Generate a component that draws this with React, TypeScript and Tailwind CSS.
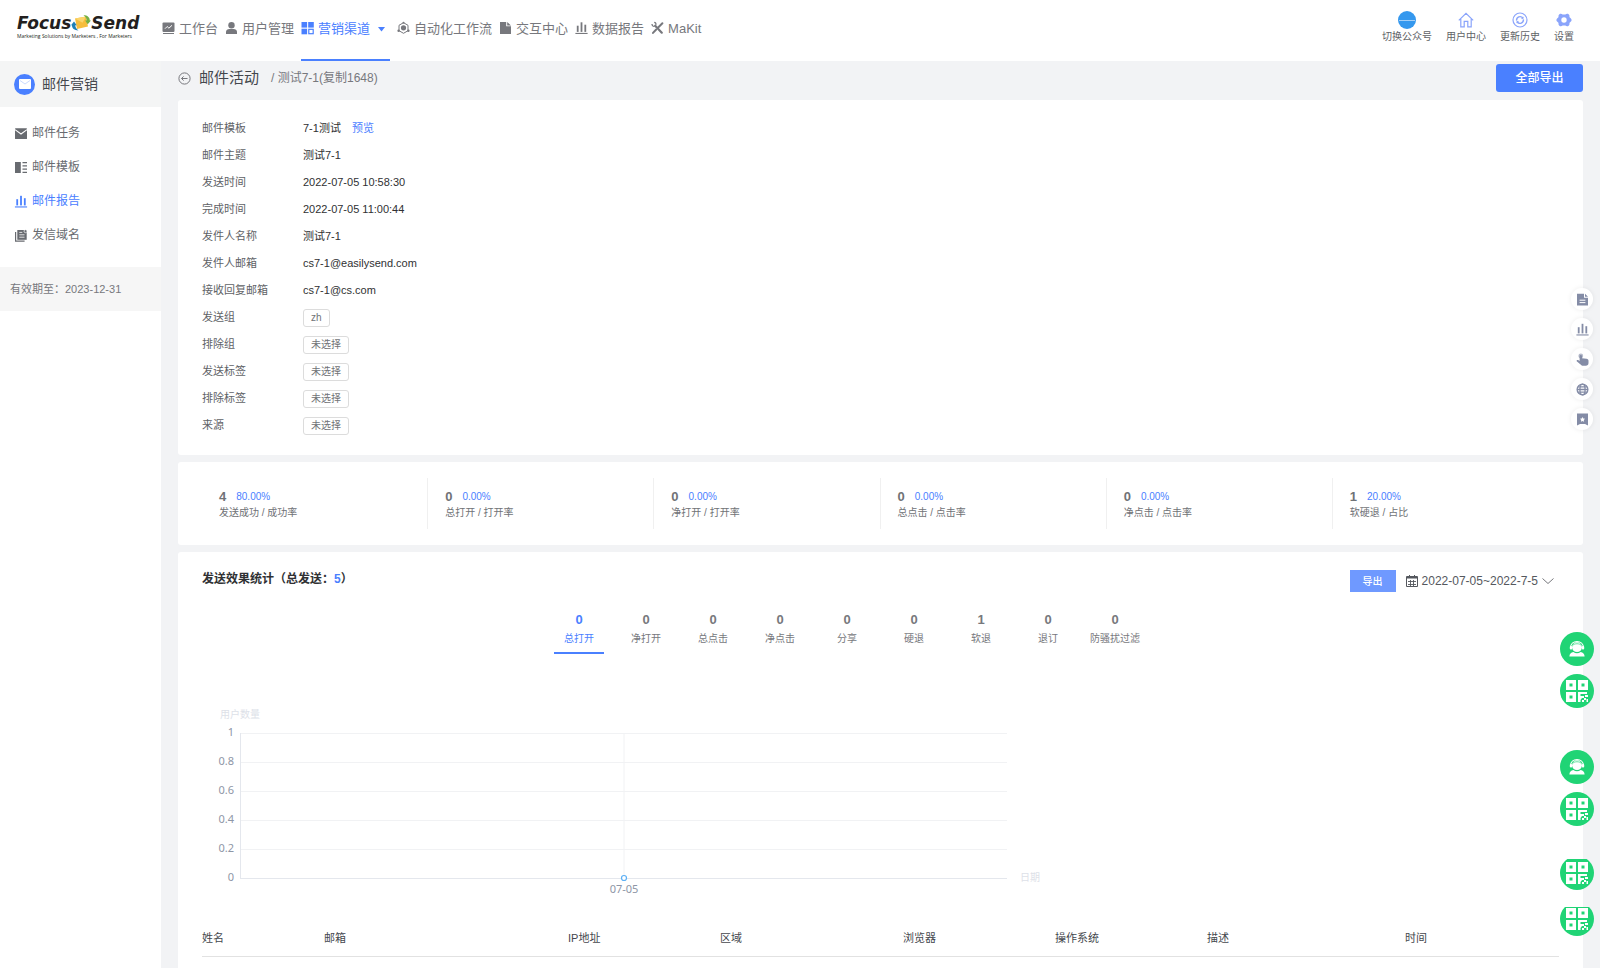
import type { ReactNode } from 'react'
import clsx from 'clsx'

/* ---------- icons ---------- */

type IconProps = { className?: string }

function BoardIcon({ className }: IconProps) {
  return (
    <svg className={className} viewBox="0 0 13 13" fill="none">
      <rect x="0.5" y="1" width="12" height="9.6" rx="1" fill="currentColor" />
      <path d="M3 7.2 5.2 5l1.7 1.7L10 3.8" stroke="#fff" strokeWidth="1" />
      <path d="M1 12h11" stroke="currentColor" strokeWidth="1" />
    </svg>
  )
}

function UserIcon({ className }: IconProps) {
  return (
    <svg className={className} viewBox="0 0 13 13" fill="currentColor">
      <circle cx="6.5" cy="3.7" r="3.2" />
      <path d="M1 12.4v-1.8c0-2 1.5-3.1 3.4-3.1h4.2c1.9 0 3.4 1.1 3.4 3.1v1.8z" />
    </svg>
  )
}

function GridIcon({ className }: IconProps) {
  return (
    <svg className={className} viewBox="0 0 13 13" fill="currentColor">
      <rect x="0.5" y="0.5" width="5.6" height="5.6" />
      <rect x="7.2" y="0.5" width="5.6" height="5.6" />
      <rect x="0.5" y="7.2" width="5.6" height="5.6" />
      <rect x="7.8" y="7.8" width="4.4" height="4.4" fill="none" stroke="currentColor" strokeWidth="1.2" />
    </svg>
  )
}

function FlowIcon({ className }: IconProps) {
  return (
    <svg className={className} viewBox="0 0 13 13" fill="currentColor">
      <path d="M6.5 1.2 11 3.8v5.4l-4.5 2.6L2 9.2V3.8z" fill="none" stroke="currentColor" strokeWidth="1" />
      <circle cx="6.5" cy="6.3" r="2.6" />
      <circle cx="6.5" cy="1.2" r="1" />
      <circle cx="1.6" cy="9.2" r="1.2" />
      <circle cx="11.4" cy="9.2" r="1.2" />
    </svg>
  )
}

function FileIcon({ className }: IconProps) {
  return (
    <svg className={className} viewBox="0 0 13 13" fill="currentColor">
      <path d="M1 .5h6.2v4.3H12v7.7H1z" />
      <path d="M8.2.5 12 3.9H8.2z" />
    </svg>
  )
}

function BarsIcon({ className }: IconProps) {
  return (
    <svg className={className} viewBox="0 0 13 13" fill="currentColor">
      <rect x="1.8" y="4.2" width="1.8" height="6.2" />
      <rect x="5.6" y="0.8" width="1.8" height="9.6" />
      <rect x="9.4" y="3.2" width="1.8" height="7.2" />
      <rect x="0.4" y="11.4" width="12.2" height="1.1" />
    </svg>
  )
}

function ToolsIcon({ className }: IconProps) {
  return (
    <svg className={className} viewBox="0 0 13 13" fill="none" stroke="currentColor">
      <path d="M4.2 4.2 10.8 11.2" strokeWidth="2.2" strokeLinecap="round" />
      <path d="M1 2.6c0 1.6 1 2.4 2.6 2.2M3.2.8c1.4.2 2 1 1.6 2.6" strokeWidth="1.3" />
      <path d="M11.4 1.8 7.4 5.8M5.2 8l-3.2 3.4" strokeWidth="2" strokeLinecap="round" />
    </svg>
  )
}

function MailIcon({ className }: IconProps) {
  return (
    <svg className={className} viewBox="0 0 13 13" fill="none">
      <rect x="0.5" y="1.2" width="12" height="10.8" rx="0.6" fill="currentColor" />
      <path d="M.5 2.6 6.5 7l6-4.4" stroke="#fff" strokeWidth="1.1" />
    </svg>
  )
}

function TemplateIcon({ className }: IconProps) {
  return (
    <svg className={className} viewBox="0 0 13 13" fill="currentColor">
      <rect x="0.5" y="1" width="5.8" height="11" />
      <path d="M8 1h4.5v1.2H8zM8 4.3h4.5v1.2H8zM8 7.5h4.5v1.2H8zM8 10.8h4.5V12H8z" />
    </svg>
  )
}

function DomainIcon({ className }: IconProps) {
  return (
    <svg className={className} viewBox="0 0 13 13" fill="none" stroke="currentColor">
      <path d="M1.1 3v9.1h9" strokeWidth="1.2" />
      <path d="M2.8 1h9.4v9.8H2.8z" fill="currentColor" stroke="none" />
      <path d="M4.8 3.4h3M4.8 5.8h5.2M4.8 8.2h5.2" stroke="#fff" strokeWidth="0.8" />
      <circle cx="11" cy="2.2" r="1.5" fill="currentColor" stroke="#fff" strokeWidth="0.7" />
    </svg>
  )
}

function HomeIcon({ className }: IconProps) {
  return (
    <svg className={className} viewBox="0 0 16 16" fill="none" stroke="currentColor" strokeWidth="1.2">
      <path d="M.8 8.4 8 1.4l7.2 7M2.8 7v7.9h3.4V9.4h3.6v5.5h3.4V7" />
    </svg>
  )
}

function HistoryIcon({ className }: IconProps) {
  return (
    <svg className={className} viewBox="0 0 16 16" fill="none" stroke="currentColor" strokeWidth="1.2">
      <circle cx="8" cy="8" r="7" />
      <path d="M4.6 8.6A3.5 3.5 0 0 1 10.8 6M11.4 7.4A3.5 3.5 0 0 1 5.2 10" strokeWidth="1.4" />
      <path d="m9.4 6.6 1.8-.2-.2-1.6M6.6 9.4l-1.8.2.2 1.6" strokeWidth="0.9" />
    </svg>
  )
}

function SettingIcon({ className }: IconProps) {
  return (
    <svg className={className} viewBox="0 0 16 16" fill="currentColor">
      <path
        fillRule="evenodd"
        d="M3.4 2.2c1-.9 2.6-.5 3.2.2h2.8c.6-.7 2.2-1.1 3.2-.2 1.1.9 1 2.1.8 2.8l1.5 1.4c.9.9.9 2.3 0 3.2L13.4 11c.2.7.3 1.9-.8 2.8-1 .9-2.6.5-3.2-.2H6.6c-.6.7-2.2 1.1-3.2.2-1.1-.9-1-2.1-.8-2.8L1.1 9.6c-.9-.9-.9-2.3 0-3.2L2.6 5c-.2-.7-.3-1.9.8-2.8zM8 5.3a2.7 2.7 0 1 0 0 5.4 2.7 2.7 0 0 0 0-5.4z"
      />
    </svg>
  )
}

function BackIcon({ className }: IconProps) {
  return (
    <svg className={className} viewBox="0 0 13 13" fill="none" stroke="currentColor">
      <circle cx="6.5" cy="6.5" r="5.6" />
      <path d="M9.5 6.5h-6M5.6 4.4 3.5 6.5l2.1 2.1" />
    </svg>
  )
}

function CalendarIcon({ className }: IconProps) {
  return (
    <svg className={className} viewBox="0 0 12 12" fill="none" stroke="currentColor">
      <path d="M.5 1.5h11v10H.5z" />
      <path d="M1 2.5h10" strokeWidth="2" />
      <path d="M3.5 0v3M8.5 0v3" />
      <path d="M2 6.5h8M2 9.5h8M4.5 5v6M7.5 5v6" strokeWidth="0.9" />
    </svg>
  )
}

function PaperIcon({ className }: IconProps) {
  return (
    <svg className={className} viewBox="0 0 13 13" fill="currentColor">
      <path d="M1 .8h7v4h4v7.6H1z" />
      <path d="M9 .8 12 3.8H9z" />
      <path d="M3.6 7.2h5.8M3.6 9.6h5.8" stroke="#fff" />
    </svg>
  )
}

function TouchIcon({ className }: IconProps) {
  return (
    <svg className={className} viewBox="0 0 13 13" fill="currentColor">
      <circle cx="4.8" cy="2.9" r="2.4" fillOpacity="0.6" />
      <path d="M3.6 3.2a1.2 1.2 0 0 1 2.4 0v2l4.6.5c1.2.2 1.9.9 1.9 2V10c0 1.7-1.1 2.8-2.7 2.8H7.2c-1.2 0-1.9-.4-2.6-1.300L.7 8.300c-.5-.8.5-1.700 1.400-1.200l1.500.9z" />
    </svg>
  )
}

function GlobeIcon({ className }: IconProps) {
  return (
    <svg className={className} viewBox="0 0 13 13" fill="none" stroke="currentColor" strokeWidth="1.3">
      <circle cx="6.5" cy="6.5" r="5.4" />
      <ellipse cx="6.5" cy="6.5" rx="2.6" ry="5.4" />
      <path d="M1 6.5h11M1.8 3.8h9.4M1.8 9.2h9.4" />
    </svg>
  )
}

function BookmarkIcon({ className }: IconProps) {
  return (
    <svg className={className} viewBox="0 0 13 13">
      <path d="M1 .6h11v12l-3-1.7H4l-3 1.7z" fill="currentColor" />
      <path d="m6.5 4 .8 1.6 1.8.2-1.3 1.2.3 1.8-1.6-.9-1.6.9.3-1.8-1.3-1.2 1.8-.2z" fill="#fff" />
    </svg>
  )
}

function ServiceIcon({ className }: IconProps) {
  return (
    <svg className={className} viewBox="0 0 16 16" fill="none">
      <circle cx="8" cy="6.2" r="4.9" fill="#fff" />
      <path d="M1.6 6.6C1.6 2.8 4.4.6 8 .6s6.4 2.2 6.4 6" stroke="#fff" strokeWidth="1.1" />
      <path d="M3.8 4.4C5.4 2.2 10.6 2.2 12.2 4.4" stroke="#20d475" strokeWidth="0.7" />
      <rect x="0.8" y="5" width="2.4" height="3.6" rx="1" fill="#fff" />
      <rect x="12.8" y="5" width="2.4" height="3.6" rx="1" fill="#fff" />
      <path d="M.4 15.6c0-2.8 1.6-4 4-4.6 2 1.6 5.2 1.6 7.2 0 2.400.6 4 1.800 4 4.600z" fill="#fff" />
    </svg>
  )
}

function QrIcon({ className }: IconProps) {
  return (
    <svg className={className} viewBox="0 0 22 22" fill="#fff">
      <path
        fillRule="evenodd"
        d="M0 0h10v10H0zM3.5 3.5v3h3v-3zM12 0h10v10H12zM15.5 3.5v3h3v-3zM0 12h10v10H0zM3.5 15.5v3h3v-3z"
      />
      <path d="M12 12h9v2h-6.500v2H18v2h-2l-1.500 2v2H12zM19 15h3v2h-3zM18 18h2v2h-2zM16 20h2v2h-2zM20.500 19H22v3h-1.500z" />
    </svg>
  )
}

/* ---------- data ---------- */

const navItems = [
  { label: '工作台', icon: BoardIcon },
  { label: '用户管理', icon: UserIcon },
  { label: '营销渠道', icon: GridIcon, active: true },
  { label: '自动化工作流', icon: FlowIcon },
  { label: '交互中心', icon: FileIcon },
  { label: '数据报告', icon: BarsIcon },
  { label: 'MaKit', icon: ToolsIcon },
]

const sideItems = [
  { label: '邮件任务', icon: MailIcon },
  { label: '邮件模板', icon: TemplateIcon },
  { label: '邮件报告', icon: BarsIcon, active: true },
  { label: '发信域名', icon: DomainIcon },
]

const details: { label: string; value?: string; tag?: string; link?: string }[] = [
  { label: '邮件模板', value: '7-1测试', link: '预览' },
  { label: '邮件主题', value: '测试7-1' },
  { label: '发送时间', value: '2022-07-05 10:58:30' },
  { label: '完成时间', value: '2022-07-05 11:00:44' },
  { label: '发件人名称', value: '测试7-1' },
  { label: '发件人邮箱', value: 'cs7-1@easilysend.com' },
  { label: '接收回复邮箱', value: 'cs7-1@cs.com' },
  { label: '发送组', tag: 'zh' },
  { label: '排除组', tag: '未选择' },
  { label: '发送标签', tag: '未选择' },
  { label: '排除标签', tag: '未选择' },
  { label: '来源', tag: '未选择' },
]

const stats = [
  { count: 4, rate: '80.00%', label: '发送成功 / 成功率' },
  { count: 0, rate: '0.00%', label: '总打开 / 打开率' },
  { count: 0, rate: '0.00%', label: '净打开 / 打开率' },
  { count: 0, rate: '0.00%', label: '总点击 / 点击率' },
  { count: 0, rate: '0.00%', label: '净点击 / 点击率' },
  { count: 1, rate: '20.00%', label: '软硬退 / 占比' },
]

const tabs = [
  { count: 0, label: '总打开' },
  { count: 0, label: '净打开' },
  { count: 0, label: '总点击' },
  { count: 0, label: '净点击' },
  { count: 0, label: '分享' },
  { count: 0, label: '硬退' },
  { count: 1, label: '软退' },
  { count: 0, label: '退订' },
  { count: 0, label: '防骚扰过滤' },
]

const columns = [
  { label: '姓名', width: 'w-[122px]' },
  { label: '邮箱', width: 'w-[244px]' },
  { label: 'IP地址', width: 'w-[152px]' },
  { label: '区域', width: 'w-[183px]' },
  { label: '浏览器', width: 'w-[152px]' },
  { label: '操作系统', width: 'w-[152px]' },
  { label: '描述', width: 'w-[198px]' },
  { label: '时间', width: 'w-[154px]' },
]

const ticks = ['1', '0.8', '0.6', '0.4', '0.2', '0']

/* ---------- layout ---------- */

function Logo() {
  return (
    <a href="#" className="block w-[124px] shrink-0 text-[#231f20]">
      <span className="flex items-center font-['DejaVu_Sans'] text-[17px] leading-4 font-bold italic">
        Focus
        <svg className="h-4 w-5 shrink-0" viewBox="0 0 20 16">
          <path d="M4 3.5 15 1.5l2 10L6 14z" fill="#f6bd3c" />
          <path d="m4 3.5 7.5 4.2L15 1.5z" fill="#fbd56b" />
          <path d="M12.5 0c4 .2 6.3 2.4 6.3 5.5H20l-3.3 3.7-2.6-3.6h1.6c0-2-1-3.6-3.2-5.6z" fill="#74b044" />
          <path d="M7.5 15.5C3.2 15.5 1 13.4.9 10.3H0l3-3.8 2.8 3.700H4.300c.1 2 1 3.700 3.200 5.300z" fill="#1f7fb5" />
        </svg>
        Send
      </span>
      <span className="mt-[2px] block font-['Open_Sans'] text-[5px] leading-[6px] font-medium whitespace-nowrap">
        Marketing Solutions by Marketers , For Marketers
      </span>
    </a>
  )
}

function QuickLink({ label, children }: { label: string; children: ReactNode }) {
  return (
    <a href="#" className="flex flex-col items-center text-[10px] leading-[14px] text-[#606266]">
      <span className="flex h-5 items-center text-[#8aa4fb]">{children}</span>
      {label}
    </a>
  )
}

function Header() {
  return (
    <header className="flex h-[61px] items-start bg-white pr-[26px] pl-[17px]">
      <div className="pt-[15px]">
        <Logo />
      </div>
      <nav className="ml-[21px] flex h-full gap-[7px]">
        {navItems.map(({ label, icon: Icon, active }) => (
          <a
            key={label}
            href="#"
            className={clsx(
              'flex h-full items-start gap-1 border-b-2 pt-5 text-[13px] leading-[17px] whitespace-nowrap',
              active ? 'border-[#4a80ff] text-[#4a80ff]' : 'border-transparent text-[#77787d]',
            )}
          >
            <Icon className="h-4 w-[13px] shrink-0" />
            {label}
            {active && (
              <svg className="mx-1 h-[17px] w-2" viewBox="0 0 8 17">
                <path d="M0 7h7l-3.5 4.5z" fill="currentColor" />
              </svg>
            )}
          </a>
        ))}
      </nav>
      <div className="ml-auto flex gap-[14px] pt-[10px]">
        <QuickLink label="切换公众号">
          <span className="flex h-[18px] w-[18px] items-center justify-center rounded-full bg-[#3598ee]">
            <span className="h-px w-4 bg-[#a5d0f7]" />
          </span>
        </QuickLink>
        <QuickLink label="用户中心">
          <HomeIcon className="h-4 w-4" />
        </QuickLink>
        <QuickLink label="更新历史">
          <HistoryIcon className="h-4 w-4" />
        </QuickLink>
        <QuickLink label="设置">
          <SettingIcon className="h-4 w-4" />
        </QuickLink>
      </div>
    </header>
  )
}

function Sidebar() {
  return (
    <aside className="w-[161px] shrink-0 bg-white">
      <div className="flex h-[46px] items-center gap-[7px] bg-[#f4f5f5] pl-[14px] text-[14px] text-[#44474d]">
        <span className="flex h-[21px] w-[21px] items-center justify-center rounded-full bg-[#4a80ff]">
          <svg className="h-[10px] w-3" viewBox="0 0 12 10">
            <rect width="12" height="10" rx="1" fill="#fff" />
            <path d="m1 1.5 5 3.5 5-3.5" fill="none" stroke="#bcd0ff" strokeWidth="0.8" />
          </svg>
        </span>
        邮件营销
      </div>
      <nav className="flex flex-col pt-[9px] pb-[15px]">
        {sideItems.map(({ label, icon: Icon, active }) => (
          <a
            key={label}
            href="#"
            className={clsx(
              'flex h-[34px] items-center gap-1 pl-[14px] text-[12px]',
              active ? 'text-[#4a80ff]' : 'text-[#686b70]',
            )}
          >
            <Icon className="h-[13px] w-[14px]" />
            {label}
          </a>
        ))}
      </nav>
      <div className="flex h-11 items-center bg-[#f6f6f6] pl-[10px] text-[11px] text-[#77787d]">
        有效期至：2023-12-31
      </div>
    </aside>
  )
}

function DetailCard() {
  return (
    <section className="rounded-[3px] bg-white px-6 pt-[15px] pb-4 text-[11px]">
      <dl>
        {details.map(({ label, value, tag, link }) => (
          <div key={label} className="flex h-[27px] items-center">
            <dt className="w-[101px] shrink-0 text-[#606266]">{label}</dt>
            <dd className="flex items-center gap-[11px] text-[#303133]">
              {value}
              {link && (
                <a href="#" className="text-[#4a80ff]">
                  {link}
                </a>
              )}
              {tag && (
                <span className="rounded-[3px] border border-[#dcdcdc] px-[7px] text-[10px] leading-4 text-[#707276]">
                  {tag}
                </span>
              )}
            </dd>
          </div>
        ))}
      </dl>
    </section>
  )
}

function StatsCard() {
  return (
    <section className="grid grid-cols-6 rounded-[3px] bg-white px-6 py-4">
      {stats.map(({ count, rate, label }) => (
        <div
          key={label}
          className="flex h-[51px] flex-col justify-center border-r border-[#f0f0f0] pt-[2px] pl-[17px] text-[10px] leading-4 text-[#707276] last:border-r-0"
        >
          <div className="flex items-center gap-[10px]">
            <b className="text-[13px]">{count}</b>
            <span className="text-[#4a80ff]">{rate}</span>
          </div>
          <div>{label}</div>
        </div>
      ))}
    </section>
  )
}

function Chart() {
  return (
    <svg
      className="mt-[50px] block h-[200px] w-[850px] font-['Noto_Sans','Noto_Sans_CJK_SC',sans-serif]"
      viewBox="0 0 850 200"
      role="img"
      aria-label="总打开"
    >
      <text x="18" y="14" fontSize="10" fill="#dde1e8">
        用户数量
      </text>
      {ticks.map((tick, i) => (
        <g key={tick}>
          <line x1="38" x2="805" y1={29.5 + i * 29} y2={29.5 + i * 29} stroke={tick === '0' ? '#e4e7ed' : '#f1f2f4'} />
          <text x="32" y={32 + i * 29} fontSize="11" fill="#8e96a6" textAnchor="end">
            {tick}
          </text>
        </g>
      ))}
      <line x1="38.5" x2="38.5" y1="29" y2="175" stroke="#e4e7ed" />
      <line x1="422" x2="422" y1="29" y2="174" stroke="#f1f2f4" />
      <circle cx="422" cy="174" r="2.5" fill="#fff" stroke="#5cb0f5" strokeWidth="1.2" />
      <text x="422" y="189" fontSize="11" fill="#8e96a6" textAnchor="middle">
        07-05
      </text>
      <text x="818" y="177" fontSize="10" fill="#dde1e8">
        日期
      </text>
    </svg>
  )
}

function ReportCard() {
  return (
    <section className="flex-1 rounded-t-[3px] bg-white px-6 pt-[18px]">
      <div className="flex items-start justify-between">
        <h2 className="text-[12px] leading-[18px] font-bold text-[#303133]">
          发送效果统计（总发送：<span className="text-[#4a80ff]">5</span>）
        </h2>
        <div className="flex h-[22px] items-center gap-[10px] pr-[5px]">
          <button type="button" className="h-[22px] w-[46px] bg-[#6f99ff] text-[10px] font-medium text-white">
            导出
          </button>
          <button type="button" className="flex items-center gap-1 text-[12px] leading-6 text-[#55585e]">
            <CalendarIcon className="h-3 w-3" />
            2022-07-05~2022-7-5
            <svg className="h-3 w-3" viewBox="0 0 12 12" fill="none" stroke="#77787d">
              <path d="m.5 3.5 5.5 5 5.5-5" />
            </svg>
          </button>
        </div>
      </div>

      <div role="tablist" className="mt-5 flex justify-center gap-[17px] pr-[67px]">
        {tabs.map(({ count, label }, i) => (
          <button
            key={label}
            type="button"
            role="tab"
            aria-selected={i === 0}
            className={clsx(
              'flex w-[50px] flex-col items-center gap-[3px] border-b-2 pb-[5px] text-[10px] leading-4 whitespace-nowrap',
              i === 0 ? 'border-[#4a80ff] text-[#4a80ff]' : 'border-transparent text-[#77787d]',
            )}
          >
            <b className="text-[13px]">{count}</b>
            {label}
          </button>
        ))}
      </div>

      <Chart />

      <table className="mt-4 w-full table-fixed text-left text-[11px] text-[#44474d]">
        <thead>
          <tr className="h-9 border-b border-[#e2e2e2]">
            {columns.map(({ label, width }) => (
              <th key={label} className={clsx('p-0 font-normal', width)}>
                {label}
              </th>
            ))}
          </tr>
        </thead>
      </table>
    </section>
  )
}

/* Small shortcuts and chat buttons pinned to the right edge */
function FloatingTools() {
  const shortcuts = [
    { name: '文档', icon: PaperIcon },
    { name: '报告', icon: BarsIcon },
    { name: '点击', icon: TouchIcon },
    { name: '地域', icon: GlobeIcon },
    { name: '收藏', icon: BookmarkIcon },
  ]
  const chats = [
    { top: 'top-[632px]', height: 'h-[34px]', icon: ServiceIcon, size: 'h-4 w-4' },
    { top: 'top-[674px]', height: 'h-[34px]', icon: QrIcon, size: 'h-[22px] w-[22px]' },
    { top: 'top-[750px]', height: 'h-[34px]', icon: ServiceIcon, size: 'h-4 w-4' },
    { top: 'top-[792px]', height: 'h-[34px]', icon: QrIcon, size: 'h-[22px] w-[22px]' },
    { top: 'top-[859px]', height: 'h-[31px]', icon: QrIcon, size: 'h-[22px] w-[22px]' },
    { top: 'top-[907px]', height: 'h-[29px]', icon: QrIcon, size: 'h-[22px] w-[22px]' },
  ]
  return (
    <>
      <div className="fixed top-[288px] right-[7px] flex flex-col gap-2">
        {shortcuts.map(({ name, icon: Icon }) => (
          <button
            key={name}
            type="button"
            aria-label={name}
            className="flex h-[22px] w-[22px] items-center justify-center rounded-full bg-white text-[#848ca6] shadow-[0_0_5px_rgba(0,0,0,0.08)]"
          >
            <Icon className="h-[13px] w-[13px]" />
          </button>
        ))}
      </div>
      {chats.map(({ top, height, icon: Icon, size }) => (
        <div key={top} className={clsx('fixed right-[6px] flex items-end overflow-hidden', top, height)}>
          <button
            type="button"
            aria-label="在线客服"
            className="flex h-[34px] w-[34px] shrink-0 items-center justify-center rounded-full bg-[#20d475]"
          >
            <Icon className={size} />
          </button>
        </div>
      ))}
    </>
  )
}

export default function App() {
  return (
    <div className="flex min-h-screen flex-col bg-[#f2f3f5] font-['Liberation_Sans','Noto_Sans_CJK_SC',sans-serif]">
      <Header />
      <div className="flex flex-1">
        <Sidebar />
        <main className="flex min-w-0 flex-1 flex-col px-[17px]">
          <div className="flex items-center pt-[3px] pb-2">
            <a href="#" aria-label="返回" className="text-[#77787d]">
              <BackIcon className="h-[13px] w-[13px]" />
            </a>
            <h1 className="ml-2 text-[15px] leading-5 text-[#44474d]">邮件活动</h1>
            <span className="ml-3 text-[12px] leading-5 text-[#77787d]">/ 测试7-1(复制1648)</span>
            <button
              type="button"
              className="ml-auto h-7 w-[87px] rounded-[3px] bg-[#4a80ff] text-[12px] font-medium text-white"
            >
              全部导出
            </button>
          </div>
          <div className="flex flex-1 flex-col gap-[7px]">
            <DetailCard />
            <StatsCard />
            <ReportCard />
          </div>
        </main>
      </div>
      <FloatingTools />
    </div>
  )
}
